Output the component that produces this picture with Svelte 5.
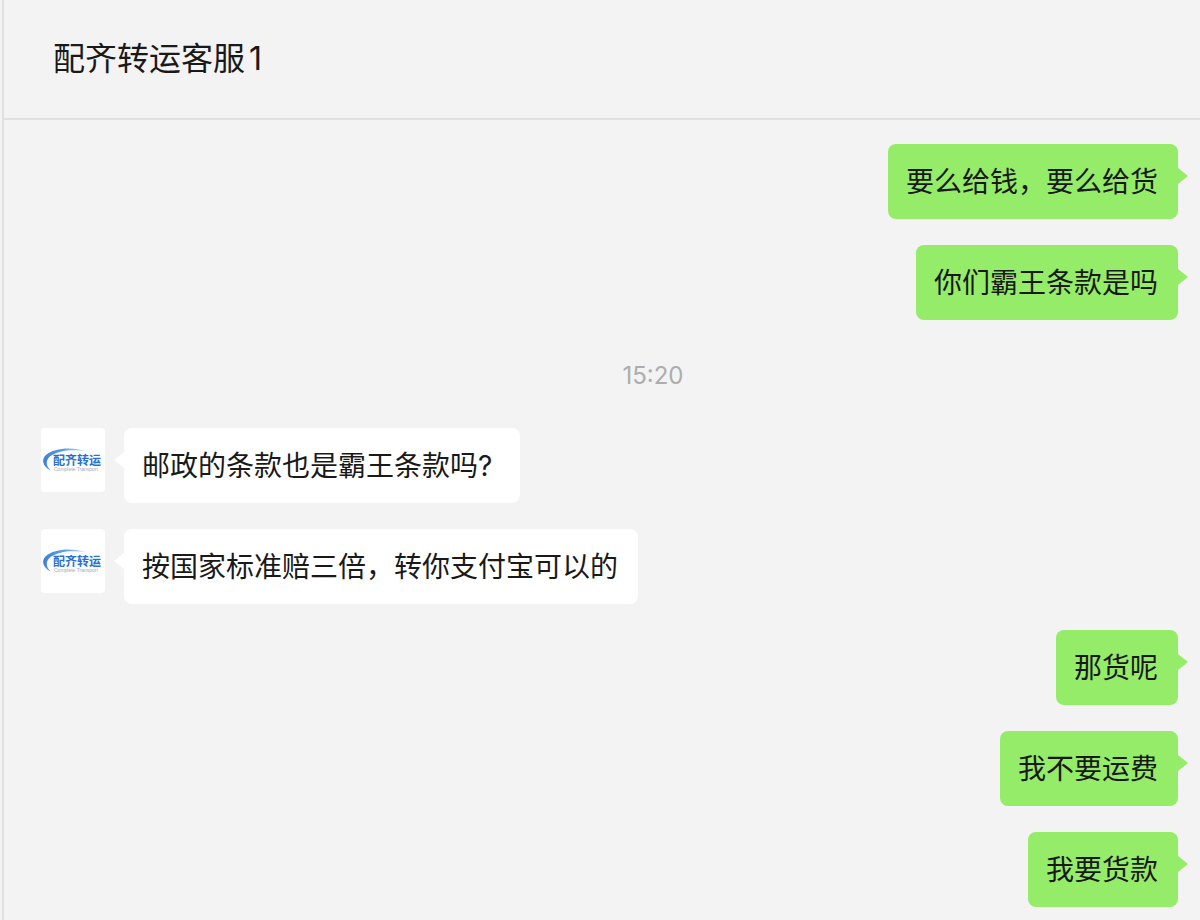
<script>
  const contact = '配齐转运客服1';
  const items = [
    { kind: 'sent', text: '要么给钱，要么给货' },
    { kind: 'sent', text: '你们霸王条款是吗' },
    { kind: 'time', text: '15:20' },
    { kind: 'received', text: '邮政的条款也是霸王条款吗? ' },
    { kind: 'received', text: '按国家标准赔三倍，转你支付宝可以的' },
    { kind: 'sent', text: '那货呢' },
    { kind: 'sent', text: '我不要运费' },
    { kind: 'sent', text: '我要货款' }
  ];
</script>

{#snippet avatar()}
  <svg class="avatar" viewBox="0 0 64 64" role="img" aria-label="配齐转运">
    <defs>
      <linearGradient id="swoosh" x1="0" y1="0" x2="1" y2="0">
        <stop offset="0" stop-color="#3f7fd6" />
        <stop offset="0.5" stop-color="#5fa3e2" />
        <stop offset="1" stop-color="#c9e2f6" />
      </linearGradient>
    </defs>
    <path
      d="M9.500 42.500C1.500 38 0 31.500 5 27C13 19.500 32 18.500 46 23.500C32 20.800 18 22 9.500 28C4.500 32 4.500 37.500 9.500 42.500Z"
      fill="url(#swoosh)"
    />
    <text class="logo-name" x="12" y="37">配齐转运</text>
    <text class="logo-sub" x="13" y="43">Complete Transport</text>
  </svg>
{/snippet}

<main class="chat">
  <header class="header">
    <h1>{contact}</h1>
  </header>

  <section class="messages" aria-label={contact}>
    {#each items as item}
      {#if item.kind === 'time'}
        <time class="time">{item.text}</time>
      {:else}
        <div class="row {item.kind}">
          {#if item.kind === 'received'}
            {@render avatar()}
          {/if}
          <p class="bubble">{item.text}</p>
        </div>
      {/if}
    {/each}
  </section>
</main>

<style>
  :global(body) {
    margin: 0;
    background: #f3f3f3;
  }

  .chat {
    box-sizing: border-box;
    min-height: 100vh;
    margin-left: 2px;
    border-left: 2px solid #e0e0e0;
    background: #f3f3f3;
    color: #191919;
    font-family: Inter, 'Noto Sans CJK SC', sans-serif;
  }

  .header {
    display: flex;
    align-items: center;
    box-sizing: border-box;
    height: 120px;
    padding: 0 49px;
    border-bottom: 2px solid #e0e0e0;
  }

  h1 {
    margin: 0;
    font-size: 32px;
    line-height: 48px;
    font-weight: 400;
    text-autospace: normal;
  }

  .messages {
    display: flex;
    flex-direction: column;
    gap: 26px;
    padding: 24px 22px 13px 37px;
  }

  .row {
    display: flex;
    align-items: flex-start;
    gap: 19px;
  }

  .sent {
    justify-content: flex-end;
  }

  .bubble {
    position: relative;
    margin: 0;
    padding: 18px 20px 17px 18px;
    border-radius: 8px;
    background: #fff;
    font-size: 28px;
    line-height: 40px;
    white-space: pre-wrap;
  }

  .bubble::after {
    content: '';
    position: absolute;
    top: 24px;
    width: 10px;
    height: 16px;
    background: inherit;
  }

  .sent .bubble {
    background: #95ec69;
  }

  .sent .bubble::after {
    left: 100%;
    clip-path: polygon(0 0, 100% 50%, 0 100%);
  }

  .received .bubble::after {
    right: 100%;
    clip-path: polygon(100% 0, 0 50%, 100% 100%);
  }

  .time {
    align-self: center;
    padding: 15px 0 11px 87px;
    color: #adadad;
    font-size: 24px;
    line-height: 30px;
  }

  .avatar {
    flex: none;
    width: 64px;
    height: 64px;
    border-radius: 4px;
    background: #fff;
  }

  .logo-name {
    fill: #2a6fd0;
    font-family: 'Noto Sans CJK SC', sans-serif;
    font-size: 12px;
    font-weight: 700;
  }

  .logo-sub {
    fill: #a3a9b3;
    font-family: 'Liberation Sans', sans-serif;
    font-size: 5px;
  }
</style>
